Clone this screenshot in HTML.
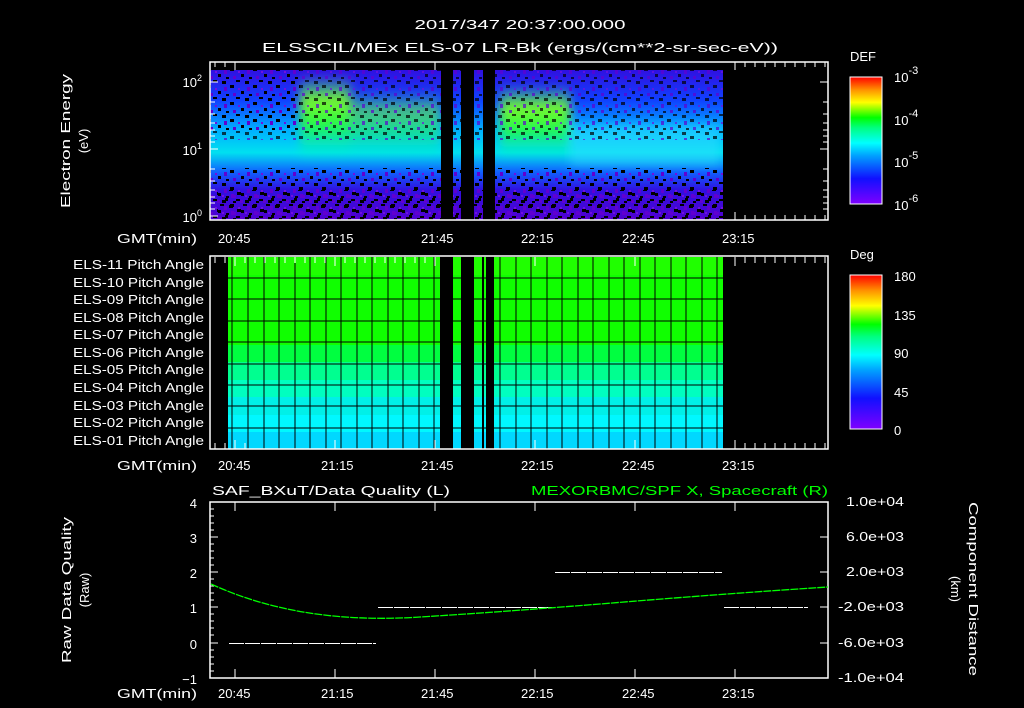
<!DOCTYPE html>
<html><head><meta charset="utf-8"><style>
html,body{margin:0;padding:0;background:#000;}
svg{display:block}
text{font-family:"Liberation Sans",sans-serif;fill:#fff;font-size:13px}
</style></head><body>
<svg width="1024" height="708" viewBox="0 0 1024 708" xmlns="http://www.w3.org/2000/svg">
<defs>
<linearGradient id="rb" x1="0" y1="1" x2="0" y2="0">
<stop offset="0" stop-color="#7f00ff"/><stop offset="0.2" stop-color="#1010ff"/><stop offset="0.38" stop-color="#00a0ff"/><stop offset="0.48" stop-color="#00ffff"/><stop offset="0.6" stop-color="#00ff80"/><stop offset="0.68" stop-color="#00ff00"/><stop offset="0.8" stop-color="#ffff00"/><stop offset="0.9" stop-color="#ff9000"/><stop offset="1" stop-color="#ff0000"/>
</linearGradient>
<linearGradient id="spec" x1="0" y1="0" x2="0" y2="1">
<stop offset="0" stop-color="#3010e0"/><stop offset="0.2" stop-color="#1040ff"/><stop offset="0.4" stop-color="#00b0ff"/><stop offset="0.55" stop-color="#00e0f0"/><stop offset="0.68" stop-color="#1060ff"/><stop offset="0.8" stop-color="#3010e0"/><stop offset="1" stop-color="#5000d0"/>
</linearGradient>
<linearGradient id="grn" x1="0" y1="0" x2="0" y2="1">
<stop offset="0" stop-color="#40ff40" stop-opacity="0"/><stop offset="0.3" stop-color="#80ff20"/><stop offset="0.6" stop-color="#20ff40"/><stop offset="1" stop-color="#00ffc0" stop-opacity="0"/>
</linearGradient>
<pattern id="noise" width="23" height="17" patternUnits="userSpaceOnUse">
<rect x="0" y="0" width="4" height="3" fill="#000"/><rect x="11" y="6" width="3" height="3" fill="#000"/><rect x="6" y="12" width="4" height="2" fill="#000"/><rect x="17" y="2" width="3" height="4" fill="#6000d0"/><rect x="3" y="8" width="3" height="3" fill="#6000d0"/><rect x="15" y="13" width="4" height="3" fill="#000"/><rect x="19" y="9" width="3" height="2" fill="#000"/><rect x="8" y="3" width="2" height="2" fill="#7010e0"/>
</pattern>
<filter id="bl"><feGaussianBlur stdDeviation="5"/></filter>
</defs>

<text x="520" y="29" text-anchor="middle" font-size="15" textLength="211" lengthAdjust="spacingAndGlyphs">2017/347 20:37:00.000</text>
<text x="262" y="52" font-size="15" textLength="516" lengthAdjust="spacingAndGlyphs">ELSSCIL/MEx ELS-07 LR-Bk  (ergs/(cm**2-sr-sec-eV))</text>

<!-- top spectrogram -->
<rect x="210" y="70" width="513" height="150" fill="url(#spec)"/>
<g filter="url(#bl)">
<rect x="300" y="75" width="50" height="85" fill="url(#grn)" opacity="0.95"/>
<rect x="350" y="90" width="90" height="70" fill="url(#grn)" opacity="0.55"/>
<rect x="500" y="85" width="70" height="75" fill="url(#grn)" opacity="0.95"/>
<rect x="570" y="125" width="150" height="40" fill="#30e0ff" opacity="0.5"/>
</g>
<rect x="210" y="70" width="513" height="70" fill="url(#noise)" opacity="0.7"/>
<rect x="210" y="70" width="90" height="60" fill="url(#noise)"/>
<rect x="210" y="168" width="513" height="52" fill="url(#noise)"/>
<rect x="210" y="185" width="513" height="35" fill="url(#noise)" transform="translate(7,5)"/>
<rect x="441" y="70" width="12" height="150" fill="#000"/>
<rect x="461" y="70" width="13" height="150" fill="#000"/>
<rect x="483" y="70" width="12" height="150" fill="#000"/>
<rect x="723" y="62" width="105" height="158" fill="#000"/>
<rect x="210" y="62" width="618" height="158" fill="none" stroke="#fff" stroke-width="1.5"/>
<g font-size="14">
<text x="202" y="87" text-anchor="end">10<tspan dy="-6" font-size="9">2</tspan></text>
<text x="202" y="155" text-anchor="end">10<tspan dy="-6" font-size="9">1</tspan></text>
<text x="202" y="222" text-anchor="end">10<tspan dy="-6" font-size="9">0</tspan></text>
</g>
<text transform="translate(70,141) rotate(-90)" text-anchor="middle" font-size="14" textLength="134" lengthAdjust="spacingAndGlyphs">Electron Energy</text>
<text transform="translate(88,141) rotate(-90)" text-anchor="middle" font-size="14">(eV)</text>
<g stroke="#fff" stroke-width="1">
<path d="M210 82h8M210 149h8M210 216h8M210 102h5M210 114h5M210 123h5M210 130h5M210 136h5M210 142h5M210 169h5M210 181h5M210 190h5M210 197h5M210 203h5M210 209h5"/>
<path d="M828 82h-8M828 149h-8M828 102h-5M828 114h-5M828 123h-5M828 130h-5M828 136h-5M828 142h-5M828 169h-5M828 181h-5M828 190h-5M828 197h-5M828 203h-5M828 209h-5"/>
<path d="M215 62v5M225 62v5M235 62v8M335 62v8M435 62v8M535 62v8M635 62v8M735 62v8M745 62v5M755 62v5M765 62v5M775 62v5M785 62v5M795 62v5M805 62v5M815 62v5M825 62v5M735 220v-8M745 220v-5M755 220v-5M765 220v-5M775 220v-5M785 220v-5M795 220v-5M805 220v-5M815 220v-5M825 220v-5"/>
</g>
<g font-size="14">
<text x="117" y="243" textLength="80" lengthAdjust="spacingAndGlyphs">GMT(min)</text>
<text x="218" y="243">20:45</text><text x="321" y="243">21:15</text><text x="421" y="243">21:45</text><text x="521" y="243">22:15</text><text x="622" y="243">22:45</text><text x="722" y="243">23:15</text>
</g>
<rect x="850" y="77" width="32" height="127" fill="url(#rb)" stroke="#fff"/>
<text x="850" y="61" font-size="16">DEF</text>
<text x="894" y="82" font-size="16">10<tspan dy="-8" font-size="11">-3</tspan></text>
<text x="894" y="125" font-size="16">10<tspan dy="-8" font-size="11">-4</tspan></text>
<text x="894" y="167" font-size="16">10<tspan dy="-8" font-size="11">-5</tspan></text>
<text x="894" y="210" font-size="16">10<tspan dy="-8" font-size="11">-6</tspan></text>

<!-- middle pitch angle -->
<g>
<rect x="228" y="257" width="495" height="18" fill="#20ff00"/>
<rect x="228" y="275" width="495" height="70" fill="#10ff00"/>
<rect x="228" y="345" width="495" height="17" fill="#00ff40"/>
<rect x="228" y="362" width="495" height="18" fill="#00ff90"/>
<rect x="228" y="380" width="495" height="17" fill="#00ffc0"/>
<rect x="228" y="397" width="495" height="18" fill="#00f0e8"/>
<rect x="228" y="415" width="495" height="17" fill="#00f8ff"/>
<rect x="228" y="432" width="495" height="17" fill="#00d8ff"/>
<g stroke="#000" stroke-width="1">
<path d="M228 278H723M228 299H723M228 321H723M228 342H723M228 364H723M228 385H723M228 406H723M228 428H723"/>
<path d="M232 257V449M248 257V449M264 257V449M279 257V449M295 257V449M310 257V449M326 257V449M341 257V449M357 257V449M372 257V449M388 257V449M403 257V449M419 257V449M434 257V449M500 257V449M516 257V449M531 257V449M547 257V449M562 257V449M578 257V449M593 257V449M609 257V449M624 257V449M640 257V449M655 257V449M671 257V449M686 257V449M702 257V449M717 257V449"/>
</g>
<rect x="440" y="257" width="13" height="192" fill="#000"/>
<rect x="461" y="257" width="13" height="192" fill="#000"/>
<rect x="482" y="257" width="2" height="192" fill="#000"/>
<rect x="486" y="257" width="8" height="192" fill="#000"/>
</g>
<rect x="210" y="256" width="618" height="193" fill="none" stroke="#fff" stroke-width="1.5"/>
<g stroke="#fff"><path d="M215 257v6M225 257v6M235 257v9M245 257v6M255 257v6M265 257v6M275 257v6M285 257v6M295 257v6M305 257v6M315 257v6M325 257v6M335 257v9M345 257v6M355 257v6M365 257v6M375 257v6M385 257v6M395 257v6M405 257v6M415 257v6M425 257v6M435 257v9M535 257v9M635 257v9M735 257v9M745 257v6M755 257v6M765 257v6M775 257v6M785 257v6M795 257v6M805 257v6M815 257v6M825 257v6"/>
<path d="M215 449v-6M225 449v-6M235 449v-9M245 449v-6M335 449v-9M435 449v-9M535 449v-9M635 449v-9M735 449v-9M745 449v-6M755 449v-6M765 449v-6M775 449v-6M785 449v-6M795 449v-6M805 449v-6M815 449v-6M825 449v-6"/></g>
<g font-size="13">
<text x="73" y="269" textLength="131" lengthAdjust="spacingAndGlyphs">ELS-11 Pitch Angle</text>
<text x="73" y="287" textLength="131" lengthAdjust="spacingAndGlyphs">ELS-10 Pitch Angle</text>
<text x="73" y="304" textLength="131" lengthAdjust="spacingAndGlyphs">ELS-09 Pitch Angle</text>
<text x="73" y="322" textLength="131" lengthAdjust="spacingAndGlyphs">ELS-08 Pitch Angle</text>
<text x="73" y="339" textLength="131" lengthAdjust="spacingAndGlyphs">ELS-07 Pitch Angle</text>
<text x="73" y="357" textLength="131" lengthAdjust="spacingAndGlyphs">ELS-06 Pitch Angle</text>
<text x="73" y="374" textLength="131" lengthAdjust="spacingAndGlyphs">ELS-05 Pitch Angle</text>
<text x="73" y="392" textLength="131" lengthAdjust="spacingAndGlyphs">ELS-04 Pitch Angle</text>
<text x="73" y="410" textLength="131" lengthAdjust="spacingAndGlyphs">ELS-03 Pitch Angle</text>
<text x="73" y="427" textLength="131" lengthAdjust="spacingAndGlyphs">ELS-02 Pitch Angle</text>
<text x="73" y="445" textLength="131" lengthAdjust="spacingAndGlyphs">ELS-01 Pitch Angle</text>
</g>
<g font-size="14">
<text x="117" y="470" textLength="80" lengthAdjust="spacingAndGlyphs">GMT(min)</text>
<text x="218" y="470">20:45</text><text x="321" y="470">21:15</text><text x="421" y="470">21:45</text><text x="521" y="470">22:15</text><text x="622" y="470">22:45</text><text x="722" y="470">23:15</text>
</g>
<rect x="850" y="275" width="32" height="154" fill="url(#rb)" stroke="#fff"/>
<text x="850" y="259" font-size="16">Deg</text>
<g font-size="16"><text x="894" y="281">180</text><text x="894" y="320">135</text><text x="894" y="358">90</text><text x="894" y="397">45</text><text x="894" y="435">0</text></g>

<!-- bottom -->
<text x="212" y="495" font-size="15" textLength="238" lengthAdjust="spacingAndGlyphs">SAF_BXuT/Data Quality (L)</text>
<text x="531" y="495" font-size="15" style="fill:#00ff00" textLength="297" lengthAdjust="spacingAndGlyphs">MEXORBMC/SPF X, Spacecraft (R)</text>
<rect x="210" y="502" width="618" height="176" fill="none" stroke="#fff" stroke-width="1.5"/>
<g stroke="#fff"><path d="M210 502h8M210 537h8M210 572h8M210 607h8M210 643h8M210 678h8M210 509h4M210 516h4M210 523h4M210 530h4M210 544h4M210 551h4M210 558h4M210 565h4M210 579h4M210 586h4M210 593h4M210 600h4M210 614h4M210 621h4M210 628h4M210 635h4M210 650h4M210 657h4M210 664h4M210 671h4"/>
<path d="M828 502h-8M828 537h-8M828 572h-8M828 607h-8M828 643h-8M828 678h-8"/>
<path d="M235 502v9M335 502v9M435 502v9M535 502v9M635 502v9M735 502v9M235 678v-9M335 678v-9M435 678v-9M535 678v-9M635 678v-9M735 678v-9"/></g>
<g text-anchor="end" font-size="15"><text x="197" y="508">4</text><text x="197" y="543">3</text><text x="197" y="578">2</text><text x="197" y="613">1</text><text x="197" y="649">0</text><text x="197" y="684">−1</text></g>
<g font-size="13"><text x="846" y="506" textLength="58" lengthAdjust="spacingAndGlyphs">1.0e+04</text><text x="846" y="541" textLength="58" lengthAdjust="spacingAndGlyphs">6.0e+03</text><text x="846" y="576" textLength="58" lengthAdjust="spacingAndGlyphs">2.0e+03</text><text x="838" y="611" textLength="66" lengthAdjust="spacingAndGlyphs">-2.0e+03</text><text x="838" y="647" textLength="66" lengthAdjust="spacingAndGlyphs">-6.0e+03</text><text x="838" y="682" textLength="66" lengthAdjust="spacingAndGlyphs">-1.0e+04</text></g>
<text transform="translate(71,590) rotate(-90)" text-anchor="middle" font-size="15" textLength="146" lengthAdjust="spacingAndGlyphs">Raw Data Quality</text>
<text transform="translate(89,590) rotate(-90)" text-anchor="middle" font-size="15">(Raw)</text>
<text transform="translate(969,589) rotate(90)" text-anchor="middle" font-size="15" textLength="174" lengthAdjust="spacingAndGlyphs">Component Distance</text>
<text transform="translate(951,589) rotate(90)" text-anchor="middle" font-size="15">(km)</text>
<g stroke="#fff" stroke-width="1" stroke-dasharray="15,1" shape-rendering="crispEdges">
<path d="M229 643.5H376M378 607.5H552M555 572.5H722M724 607.5H808"/></g>
<path d="M211 584 Q300 625 420 617 Q500 612 600 604 Q720 594 828 587" fill="none" stroke="#00ff00" stroke-width="1.3" stroke-dasharray="8,1"/>
<g font-size="14">
<text x="117" y="698" textLength="80" lengthAdjust="spacingAndGlyphs">GMT(min)</text>
<text x="218" y="698">20:45</text><text x="321" y="698">21:15</text><text x="421" y="698">21:45</text><text x="521" y="698">22:15</text><text x="622" y="698">22:45</text><text x="722" y="698">23:15</text>
</g>
</svg>
</body></html>
